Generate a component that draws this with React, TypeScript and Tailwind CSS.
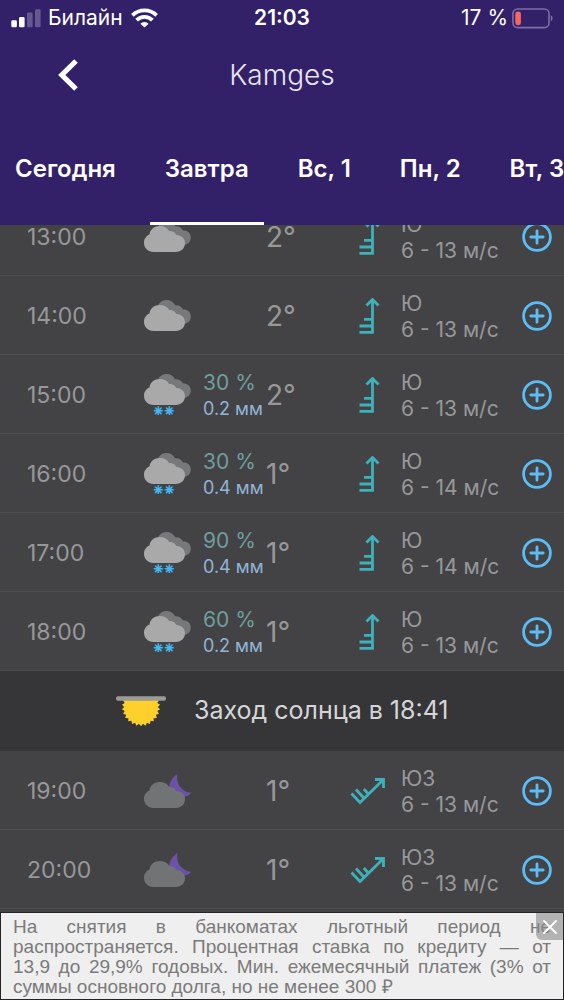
import React from "react";

type Sky = "cloud" | "snow" | "night";

interface Hour {
  time: string;
  sky: Sky;
  chance?: string;
  amount?: string;
  temp: string;
  dir: "Ю" | "ЮЗ";
  wind: string;
}

const before: Hour[] = [
  { time: "13:00", sky: "cloud", temp: "2°", dir: "Ю", wind: "6 - 13 м/с" },
  { time: "14:00", sky: "cloud", temp: "2°", dir: "Ю", wind: "6 - 13 м/с" },
  { time: "15:00", sky: "snow", chance: "30 %", amount: "0.2 мм", temp: "2°", dir: "Ю", wind: "6 - 13 м/с" },
  { time: "16:00", sky: "snow", chance: "30 %", amount: "0.4 мм", temp: "1°", dir: "Ю", wind: "6 - 14 м/с" },
  { time: "17:00", sky: "snow", chance: "90 %", amount: "0.4 мм", temp: "1°", dir: "Ю", wind: "6 - 14 м/с" },
  { time: "18:00", sky: "snow", chance: "60 %", amount: "0.2 мм", temp: "1°", dir: "Ю", wind: "6 - 13 м/с" },
];

const after: Hour[] = [
  { time: "19:00", sky: "night", temp: "1°", dir: "ЮЗ", wind: "6 - 13 м/с" },
  { time: "20:00", sky: "night", temp: "1°", dir: "ЮЗ", wind: "6 - 13 м/с" },
];

const days = ["Сегодня", "Завтра", "Вс, 1", "Пн, 2", "Вт, 3"];

function CloudShape() {
  return (
    <path d="M9.5 31C4 31 0 27 0 21.8C0 17.8 2.2 14.8 5.5 13.4C6 8.4 10.500 5 15.8 5C19.800 5 23.300 6.800 25.2 9.900C28.500 9.800 31.300 11.300 32.300 14C37.300 13.800 41 17.500 41 22.300C41 27.300 37 31 32 31Z" />
  );
}

function Flake({ x }: { x: number }) {
  return (
    <g transform={`translate(${x} 36.8)`} stroke="#41b8f5" strokeWidth="1.5" strokeLinecap="round">
      <path d="M0-4V4M-4 0H4M-2.8-2.8L2.8 2.8M-2.8 2.8L2.8-2.8" />
    </g>
  );
}

function SkyIcon({ sky }: { sky: Sky }) {
  if (sky === "night") {
    return (
      <svg width="48" height="34" viewBox="0 0 48 34" aria-hidden="true">
        <path d="M33.500 0C31.500 9 37 18 47.500 18.800C44 23 37 24 32 21C26 20 24 15 25.500 10.500C26.800 6 29.500 2.500 33.500 0Z" fill="#6a52a6" />
        <g fill="#717375" transform="translate(0 3)">
          <CloudShape />
        </g>
      </svg>
    );
  }
  const h = sky === "snow" ? 41 : 31;
  return (
    <svg width="47" height={h} viewBox={`0 0 47 ${h}`} aria-hidden="true">
      <path
        d="M13 9C14 3 18 0 22.500 0C26.500 0 29.500 2 31 5.200C35 4.800 37.500 6.500 38.800 9.300C43.500 9.300 46.800 12.300 46.800 16.500C46.800 21 43.500 24 39 24H30Z"
        fill="#77787a"
      />
      <g fill="#a9a9aa">
        <CloudShape />
      </g>
      {sky === "snow" && (
        <>
          <Flake x={14.3} />
          <Flake x={25.3} />
        </>
      )}
    </svg>
  );
}

function WindIcon({ dir }: { dir: Hour["dir"] }) {
  const d =
    dir === "Ю"
      ? "M22.5 1.5V34.3H9.5M9.5 28H22.5M14 21.3H22.5M16.5 7.5L22.5 1.5L28.5 7.5"
      : "M33.5 6.5L10 29.5L1.5 20.5M14.3 25.5L6 16.5M18.6 21.3L13.8 16M25 6.5H33.5V15";
  return (
    <svg width="36" height="36" viewBox="0 0 36 36" fill="none" stroke="#3fb1ba" strokeWidth="2.8" aria-hidden="true">
      <path d={d} />
    </svg>
  );
}

function HourRow({ hour }: { hour: Hour }) {
  return (
    <li className="grid h-[79px] shrink-0 grid-cols-[117px_59px_63px_84px_51px_1fr_30px] items-center border-b border-[#4e4e50] bg-[#434345] pt-px pr-3 pl-[27px] whitespace-nowrap text-[#98989a]">
      <span className="text-[23px] leading-7">{hour.time}</span>
      <SkyIcon sky={hour.sky} />
      <span className="flex flex-col pt-[3px] leading-[26px]">
        {hour.chance && <span className="text-[21px] text-[#6f9d9d]">{hour.chance}</span>}
        {hour.amount && <span className="text-[18px] text-[#92b4d8]">{hour.amount}</span>}
      </span>
      <span className="text-[28px] leading-8">{hour.temp}</span>
      <WindIcon dir={hour.dir} />
      <span className="flex flex-col pt-[3px] text-[21px] leading-[26px]">
        <span>{hour.dir}</span>
        <span>{hour.wind}</span>
      </span>
      <button type="button" aria-label={`Добавить ${hour.time}`} className="size-[30px]">
        <svg width="30" height="30" viewBox="0 0 30 30" fill="none" stroke="#5abdf7" strokeWidth="2.8" strokeLinecap="round">
          <circle cx="15" cy="15" r="13.4" />
          <path d="M15 8.8V21.2M8.8 15H21.2" />
        </svg>
      </button>
    </li>
  );
}

function SunsetIcon() {
  const teeth = 26;
  const points = Array.from({ length: teeth * 2 }, (_, i) => {
    const r = i % 2 === 0 ? 19.2 : 16.8;
    const a = (Math.PI * i) / teeth + Math.PI / 2;
    return `${(25 + r * Math.cos(a)).toFixed(2)},${(11 + r * Math.sin(a)).toFixed(2)}`;
  }).join(" ");
  return (
    <svg width="50" height="31" viewBox="0 0 50 31" aria-hidden="true">
      <clipPath id="below-horizon">
        <rect x="0" y="3" width="50" height="28" />
      </clipPath>
      <polygon points={points} fill="#fdd02c" clipPath="url(#below-horizon)" />
      <rect x="0" y="0.3" width="50" height="4.4" rx="2" fill="#9b9b97" />
    </svg>
  );
}

function StatusBar() {
  return (
    <div className="grid h-9 grid-cols-[1fr_auto_1fr] items-center pr-[11px] pl-[11px] text-[21px] leading-6">
      <div className="flex items-center">
        <svg width="30" height="19" viewBox="0 0 30 19" fill="#fff" aria-hidden="true">
          <rect x="0.3" y="11.3" width="5.6" height="7" rx="1.4" />
          <rect x="8" y="8" width="5.6" height="10.3" rx="1.4" />
          <rect x="16" y="3.5" width="5.6" height="14.8" rx="1.4" opacity="0.25" />
          <rect x="24" y="0.3" width="5.6" height="18" rx="1.4" opacity="0.25" />
        </svg>
        <span className="ml-[7px]">Билайн</span>
        <svg className="ml-2" width="27" height="20" viewBox="0 0 27 20" fill="none" stroke="#fff" strokeWidth="3.8" aria-hidden="true">
          <path d="M1.4 7.4A17.2 17.2 0 0 1 25.6 7.4" />
          <path d="M5.6 12.1A11.2 11.2 0 0 1 21.4 12.1" />
          <path d="M9.4 15.7A5.8 5.8 0 0 1 17.6 15.7L13.5 19.6Z" fill="#fff" stroke="none" />
        </svg>
      </div>
      <span className="font-semibold">21:03</span>
      <div className="flex items-center justify-end gap-1">
        <span>17 %</span>
        <svg width="41" height="21" viewBox="0 0 41 21" aria-hidden="true">
          <rect x="1" y="1" width="36" height="18.6" rx="4.5" fill="none" stroke="#7d6fa8" strokeWidth="1.6" />
          <rect x="3.3" y="3.6" width="5.6" height="13.6" rx="2.4" fill="#fb6560" />
          <path d="M38.8 7.3C41.100 8.3 41.100 12.3 38.8 13.3Z" fill="#7d6fa8" />
        </svg>
      </div>
    </div>
  );
}

export default function App() {
  return (
    <div className="flex h-screen flex-col overflow-hidden bg-[#434345] font-['Inter','Noto_Sans',sans-serif]">
      <header className="relative z-10 shrink-0 bg-[#322168] text-white">
        <StatusBar />
        <div className="grid h-[77px] grid-cols-[1fr_auto_1fr] items-center">
          <button type="button" aria-label="Назад" className="ml-[57px] flex h-8 w-6 items-center">
            <svg width="22" height="32" viewBox="0 0 22 32" fill="none" stroke="#fff" strokeWidth="5.2">
              <path d="M19 2L4.8 16L19 30" />
            </svg>
          </button>
          <h1 className="text-[28px] leading-9 font-light text-[#e9e5f5]">Kamges</h1>
        </div>
        <nav className="flex h-28 gap-[19px] overflow-hidden text-[24px] font-semibold whitespace-nowrap">
          {days.map((day) => (
            <a
              key={day}
              href="#day"
              aria-current={day === "Завтра" ? "page" : undefined}
              className="flex shrink-0 items-center border-y-[3px] border-transparent px-[15px] aria-[current=page]:border-b-white"
            >
              {day}
            </a>
          ))}
        </nav>
      </header>

      <main className="min-h-0 flex-1 overflow-hidden">
        <ul className="-mt-7 flex flex-col">
          {before.map((hour) => (
            <HourRow key={hour.time} hour={hour} />
          ))}
          <li className="flex h-20 shrink-0 items-center bg-[#363638] pl-[116px] text-[25px] text-[#d6d6d8]">
            <SunsetIcon />
            <span className="ml-7">Заход солнца в 18:41</span>
          </li>
          {after.map((hour) => (
            <HourRow key={hour.time} hour={hour} />
          ))}
        </ul>
      </main>

      <aside className="relative shrink-0 border border-[#242426] bg-[#efefef] px-3 pt-1 pb-[2px] text-justify font-['Liberation_Sans',Arial,sans-serif] text-[19px] leading-5 text-[#7b7b7b]">
        <p>
          На снятия в банкоматах льготный период не распространяется. Процентная ставка по кредиту — от
          {" 13,9\u00a0до 29,9% годовых. Мин. ежемесячный платеж (3% от суммы основного долга, но не менее 300 ₽"}
        </p>
        <button
          type="button"
          aria-label="Закрыть"
          className="absolute top-0 right-0 flex size-[27px] items-center justify-center rounded-bl-md bg-[#8a8a8a]/60"
        >
          <svg width="14" height="14" viewBox="0 0 14 14" stroke="#fff" strokeWidth="1.8" strokeLinecap="round">
            <path d="M1 1L13 13M13 1L1 13" />
          </svg>
        </button>
      </aside>
    </div>
  );
}
